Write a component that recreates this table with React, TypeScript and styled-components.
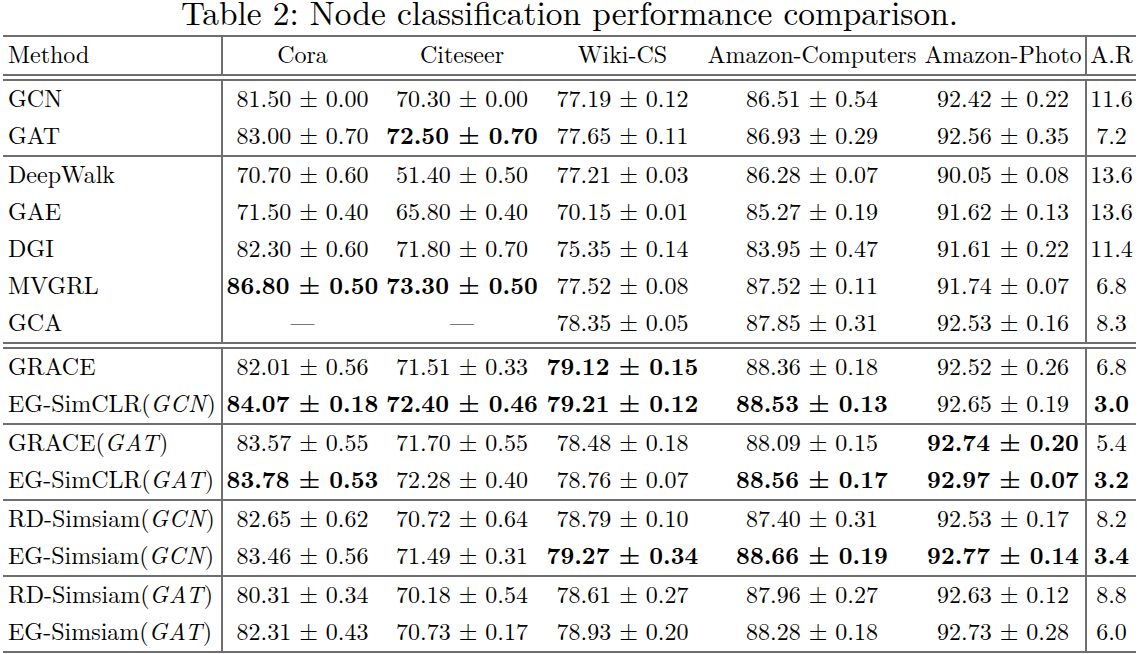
import * as React from 'react';
import styled, { createGlobalStyle, css } from 'styled-components';

const GlobalStyle = createGlobalStyle`
  body {
    margin: 0;
    background: #fff;
  }
`;

const COLUMNS = '220px 159px 160px 161px 218px 166px 49px';

const serif = css`
  font-family: "Latin Modern Roman", "Liberation Serif", serif;
`;

const Page = styled.div`
  ${serif};
  color: #000;
  width: 1133px;
  padding-left: 3px;
`;

const Caption = styled.div`
  ${serif};
  height: 35px;
  font-size: 33.4px;
  line-height: 22px;
  text-align: center;
  white-space: nowrap;
`;

const Rule = styled.div`
  height: 2px;
  background: #6e6e6e;
`;

const DoubleRule = styled.div`
  display: flex;
  flex-direction: column;
  gap: 3px;
`;

const Row = styled.div`
  ${serif};
  display: grid;
  grid-template-columns: ${COLUMNS};
  height: 37px;
  font-size: 24px;
  line-height: 33px;
  white-space: nowrap;
`;

const Cell = styled.div<{ $left?: boolean; $divider?: boolean }>`
  ${serif};
  box-sizing: border-box;
  text-align: ${p => (p.$left ? 'left' : 'center')};
  padding-left: ${p => (p.$left ? '5px' : '0')};
  border-right: ${p => (p.$divider ? '2px solid #6e6e6e' : 'none')};
  overflow: visible;
`;

const Label = styled.span`
  ${serif};
`;

const MathVar = styled.i`
  ${serif};
  letter-spacing: 0.8px;
`;

const Num = styled.span<{ $bold?: boolean }>`
  ${serif};
  font-weight: ${p => (p.$bold ? 700 : 400)};
`;

type Entry = string | { b: string };

interface MethodRow {
  name: string;
  arch?: string;
  values: Entry[];
  rank: Entry;
}

const groups: { rows: MethodRow[]; doubleAfter?: boolean }[] = [
  {
    rows: [
      { name: 'GCN', values: ['81.50 ± 0.00', '70.30 ± 0.00', '77.19 ± 0.12', '86.51 ± 0.54', '92.42 ± 0.22'], rank: '11.6' },
      { name: 'GAT', values: ['83.00 ± 0.70', { b: '72.50 ± 0.70' }, '77.65 ± 0.11', '86.93 ± 0.29', '92.56 ± 0.35'], rank: '7.2' },
    ],
  },
  {
    doubleAfter: true,
    rows: [
      { name: 'DeepWalk', values: ['70.70 ± 0.60', '51.40 ± 0.50', '77.21 ± 0.03', '86.28 ± 0.07', '90.05 ± 0.08'], rank: '13.6' },
      { name: 'GAE', values: ['71.50 ± 0.40', '65.80 ± 0.40', '70.15 ± 0.01', '85.27 ± 0.19', '91.62 ± 0.13'], rank: '13.6' },
      { name: 'DGI', values: ['82.30 ± 0.60', '71.80 ± 0.70', '75.35 ± 0.14', '83.95 ± 0.47', '91.61 ± 0.22'], rank: '11.4' },
      { name: 'MVGRL', values: [{ b: '86.80 ± 0.50' }, { b: '73.30 ± 0.50' }, '77.52 ± 0.08', '87.52 ± 0.11', '91.74 ± 0.07'], rank: '6.8' },
      { name: 'GCA', values: ['—', '—', '78.35 ± 0.05', '87.85 ± 0.31', '92.53 ± 0.16'], rank: '8.3' },
    ],
  },
  {
    rows: [
      { name: 'GRACE', values: ['82.01 ± 0.56', '71.51 ± 0.33', { b: '79.12 ± 0.15' }, '88.36 ± 0.18', '92.52 ± 0.26'], rank: '6.8' },
      { name: 'EG-SimCLR', arch: 'GCN', values: [{ b: '84.07 ± 0.18' }, { b: '72.40 ± 0.46' }, { b: '79.21 ± 0.12' }, { b: '88.53 ± 0.13' }, '92.65 ± 0.19'], rank: { b: '3.0' } },
    ],
  },
  {
    rows: [
      { name: 'GRACE', arch: 'GAT', values: ['83.57 ± 0.55', '71.70 ± 0.55', '78.48 ± 0.18', '88.09 ± 0.15', { b: '92.74 ± 0.20' }], rank: '5.4' },
      { name: 'EG-SimCLR', arch: 'GAT', values: [{ b: '83.78 ± 0.53' }, '72.28 ± 0.40', '78.76 ± 0.07', { b: '88.56 ± 0.17' }, { b: '92.97 ± 0.07' }], rank: { b: '3.2' } },
    ],
  },
  {
    rows: [
      { name: 'RD-Simsiam', arch: 'GCN', values: ['82.65 ± 0.62', '70.72 ± 0.64', '78.79 ± 0.10', '87.40 ± 0.31', '92.53 ± 0.17'], rank: '8.2' },
      { name: 'EG-Simsiam', arch: 'GCN', values: ['83.46 ± 0.56', '71.49 ± 0.31', { b: '79.27 ± 0.34' }, { b: '88.66 ± 0.19' }, { b: '92.77 ± 0.14' }], rank: { b: '3.4' } },
    ],
  },
  {
    rows: [
      { name: 'RD-Simsiam', arch: 'GAT', values: ['80.31 ± 0.34', '70.18 ± 0.54', '78.61 ± 0.27', '87.96 ± 0.27', '92.63 ± 0.12'], rank: '8.8' },
      { name: 'EG-Simsiam', arch: 'GAT', values: ['82.31 ± 0.43', '70.73 ± 0.17', '78.93 ± 0.20', '88.28 ± 0.18', '92.73 ± 0.28'], rank: '6.0' },
    ],
  },
];

const headers = ['Cora', 'Citeseer', 'Wiki-CS', 'Amazon-Computers', 'Amazon-Photo'];

function Value({ v }: { v: Entry }) {
  return typeof v === 'string' ? <Num>{v}</Num> : <Num $bold>{v.b}</Num>;
}

function Double() {
  return (
    <DoubleRule>
      <Rule />
      <Rule />
    </DoubleRule>
  );
}

export default function App() {
  return (
    <Page>
      <GlobalStyle />
      <Caption>Table 2: Node classification performance comparison.</Caption>
      <Rule />
      <Row>
        <Cell $left $divider><Label>Method</Label></Cell>
        {headers.map((h, i) => (
          <Cell key={h} $divider={i === headers.length - 1}><Label>{h}</Label></Cell>
        ))}
        <Cell><Label>A.R</Label></Cell>
      </Row>
      <Double />
      {groups.map((g, gi) => (
        <React.Fragment key={gi}>
          {g.rows.map((r, ri) => (
            <Row key={ri}>
              <Cell $left $divider>
                <Label>{r.name}{r.arch && <>(<MathVar>{r.arch}</MathVar>)</>}</Label>
              </Cell>
              {r.values.map((v, vi) => (
                <Cell key={vi} $divider={vi === r.values.length - 1}><Value v={v} /></Cell>
              ))}
              <Cell><Value v={r.rank} /></Cell>
            </Row>
          ))}
          {g.doubleAfter ? <Double /> : <Rule />}
        </React.Fragment>
      ))}
    </Page>
  );
}
